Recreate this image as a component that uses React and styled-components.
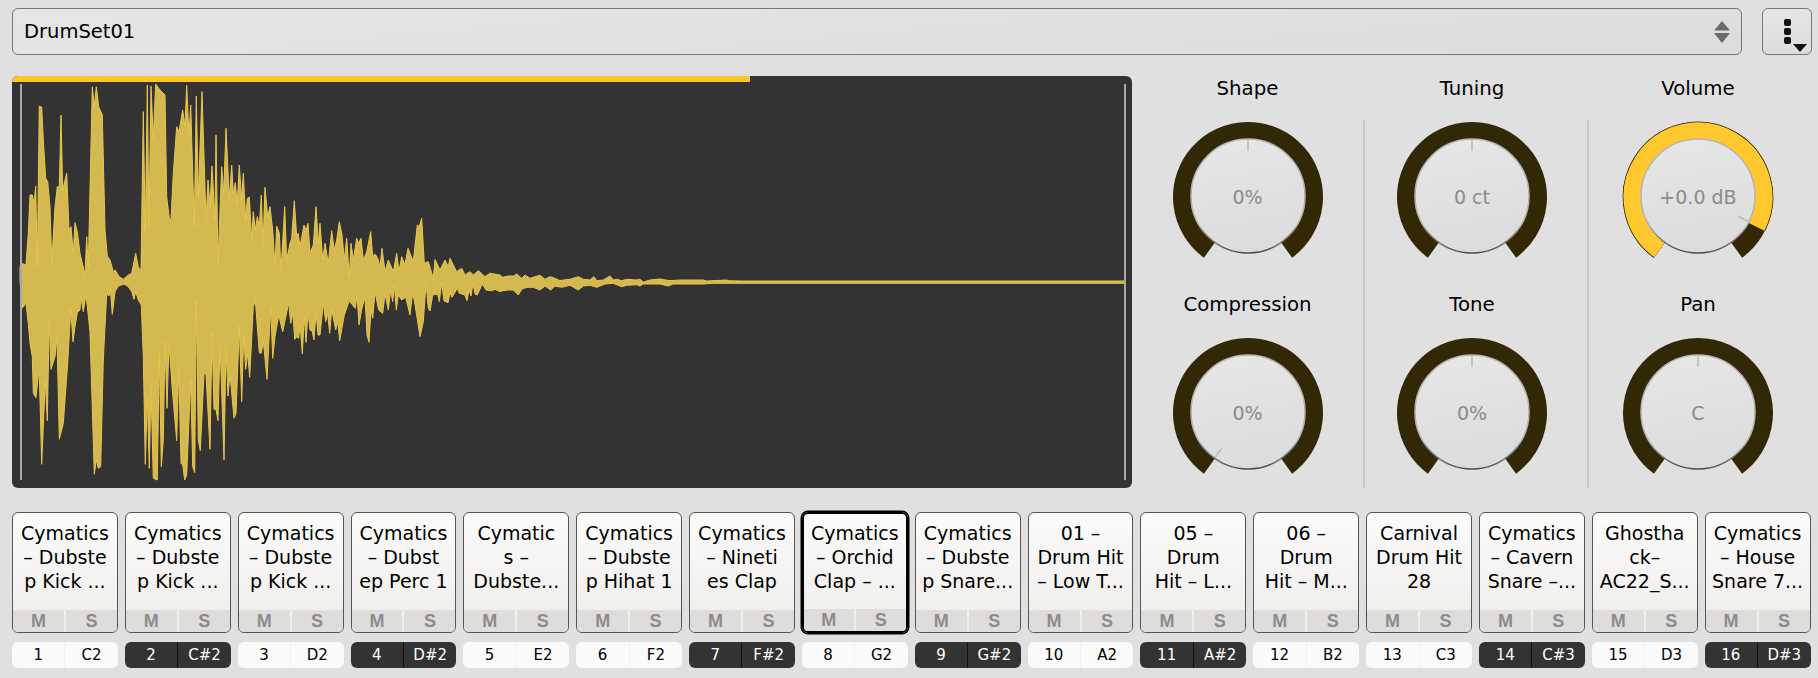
import React from 'react';
import styled, { createGlobalStyle } from 'styled-components';

const Global = createGlobalStyle`
  html, body { margin: 0; background: #e0e0e0; }
  body { font-family: "DejaVu Sans", "Liberation Sans", sans-serif; color: #000; }
`;

const Page = styled.div`
  width: 1818px;
  height: 678px;
  box-sizing: border-box;
  padding: 8px 6px 0 12px;
  display: flex;
  flex-direction: column;
  overflow: hidden;
`;

const TopBar = styled.div`
  display: flex;
  height: 47px;
  gap: 20px;
  margin-bottom: 21px;
`;

const PresetSelect = styled.div`
  flex: 1;
  box-sizing: border-box;
  display: flex;
  align-items: center;
  justify-content: space-between;
  padding: 0 10px 0 11px;
  border: 1.5px solid #777;
  border-radius: 6px;
  background: linear-gradient(175deg, #e6e6e6, #dcdcdc);
  font-size: 19.5px;
`;

const MenuButton = styled.div`
  width: 50px;
  box-sizing: border-box;
  border: 1.5px solid #777;
  border-radius: 6px;
  background: linear-gradient(175deg, #e6e6e6, #dcdcdc);
  display: flex;
`;

const Main = styled.div`
  display: flex;
  height: 412px;
  margin-bottom: 24px;
`;

const WavePanel = styled.div`
  position: relative;
  width: 1120px;
  height: 412px;
  background: #333;
  border-radius: 6px;
  overflow: hidden;
  flex: none;
`;

const WaveSvg = styled.svg`
  display: block;
  width: 100%;
  height: 100%;
`;

const Progress = styled.div`
  position: absolute;
  top: 0;
  left: 0;
  height: 6px;
  background: #ffc42e;
`;

const Marker = styled.div`
  position: absolute;
  top: 8px;
  bottom: 8px;
  width: 1.5px;
  background: #a8a8a8;
  left: ${p => p.$left}px;
`;

const Controls = styled.div`
  flex: 1;
  display: grid;
  grid-template-columns: 231px 224px 224px;
  grid-template-rows: 412px;
`;

const Column = styled.div`
  position: relative;
  display: flex;
  flex-direction: column;
  box-sizing: border-box;
  padding-right: ${p => p.$shift || 0}px;
  &::before {
    content: '';
    display: ${p => (p.$divider ? 'block' : 'none')};
    position: absolute;
    left: 0;
    top: 44px;
    bottom: 0;
    width: 1.5px;
    background: #c8c8c8;
  }
`;

const KnobCell = styled.div`
  height: 216px;
  flex: none;
  display: flex;
  flex-direction: column;
  align-items: center;
`;

const KnobLabel = styled.div`
  height: 26px;
  line-height: 26px;
  font-size: 19.75px;
  margin-bottom: 17px;
  white-space: nowrap;
`;

const KnobBody = styled.div`
  position: relative;
  width: 156px;
  height: 156px;
`;

const KnobSvg = styled.svg`
  display: block;
  width: 156px;
  height: 156px;
`;

const KnobValue = styled.div`
  position: absolute;
  inset: 0;
  display: flex;
  align-items: center;
  justify-content: center;
  font-size: 19px;
  color: #8a8a8a;
  white-space: nowrap;
`;

const PadGrid = styled.div`
  display: grid;
  grid-template-columns: repeat(16, 1fr);
  column-gap: 7px;
  margin-right: 1.5px;
`;

const PadSlot = styled.div`
  display: flex;
  flex-direction: column;
  min-width: 0;
`;

const Pad = styled.div`
  height: 121px;
  box-sizing: border-box;
  display: flex;
  flex-direction: column;
  border: ${p => (p.$selected ? '2.5px solid #000' : '1.5px solid #555')};
  border-radius: 6px;
  background: linear-gradient(180deg, #fbfbfa, #efedea);
  overflow: hidden;
  box-shadow: ${p => (p.$selected ? '0 0 0 1.5px #000' : 'none')};
`;

const PadName = styled.div`
  flex: 1;
  padding-top: ${p => (p.$selected ? 7 : 8)}px;
  text-align: center;
  font-size: 19px;
  line-height: 24px;
  white-space: nowrap;
`;

const PadLine = styled.div`
  display: block;
`;

const MuteSolo = styled.div`
  display: flex;
  height: 22px;
  gap: 2px;
`;

const MuteSoloCell = styled.div`
  flex: 1;
  display: flex;
  align-items: center;
  justify-content: center;
  background: #dfdddb;
  color: #8c8c8c;
  font: bold 18px "Liberation Sans", Arial, sans-serif;
`;

const KeyRow = styled.div`
  margin-top: 9px;
  height: 26px;
  display: flex;
  border-radius: 6px;
  overflow: hidden;
  background: ${p => (p.$black ? '#333' : '#fafafa')};
  color: ${p => (p.$black ? '#fff' : '#000')};
  font-size: 15px;
`;

const KeyCell = styled.div`
  flex: 1;
  display: flex;
  align-items: center;
  justify-content: center;
  border-left: ${p => (p.$split ? `1.5px solid ${p.$black ? '#111' : '#f2f2f2'}` : 'none')};
`;

const upper = `60,800 65,790 78,795 85,700 90,585 97,585 102,610 107,558 112,800 118,318 125,322 130,420 137,535 143,545 150,620 155,790 165,620 172,560 178,560 183,345 188,570 200,520 207,690 213,680 220,760 225,668 232,695 240,760 255,825 260,710 265,800 277,260 283,320 289,260 296,320 307,345 315,690 322,768 330,780 340,815 345,810 358,830 370,838 385,825 395,820 407,760 415,800 423,812 430,335 436,700 442,255 447,680 453,258 460,415 467,252 480,270 495,285 500,590 508,655 513,660 520,520 530,380 537,395 548,330 555,380 560,255 567,410 572,315 583,680 589,288 595,590 606,275 618,660 624,540 630,620 636,498 645,660 648,405 654,790 665,500 671,580 678,385 688,600 695,495 700,580 706,548 712,610 718,495 725,600 730,520 737,660 742,595 748,592 755,720 760,635 766,690 772,650 778,680 784,585 789,740 795,562 803,650 810,620 818,690 825,800 830,678 838,700 843,815 854,620 860,780 870,730 875,715 883,602 890,710 895,700 900,740 912,675 918,690 924,670 930,760 940,735 948,620 955,730 960,670 968,780 975,730 985,790 995,692 1003,750 1010,720 1018,665 1026,705 1033,780 1040,715 1048,830 1053,730 1060,780 1070,715 1076,730 1083,715 1090,780 1100,755 1112,695 1118,770 1125,762 1133,775 1140,800 1146,745 1155,815 1165,780 1180,815 1190,760 1197,815 1205,770 1215,795 1224,745 1240,785 1252,675 1258,680 1265,655 1273,790 1285,785 1300,835 1305,778 1320,810 1335,780 1345,800 1350,775 1360,795 1370,815 1385,805 1395,825 1410,815 1420,825 1435,812 1455,830 1470,820 1500,825`;
const lower = `60,0 66,85 78,70 85,130 90,190 97,230 100,340 108,353 115,285 118,280 125,553 136,300 142,422 148,120 153,268 165,230 171,170 178,478 190,430 203,250 212,88 219,185 225,140 232,98 240,90 243,50 250,95 258,42 270,155 283,583 289,540 295,565 302,560 310,240 320,42 327,48 331,25 337,103 345,35 355,18 372,12 385,20 395,35 402,58 407,35 415,60 424,75 430,230 436,553 442,350 448,565 453,318 460,595 472,600 478,218 484,560 490,480 495,185 501,385 507,190 517,330 530,482 536,265 543,550 548,555 554,600 560,585 572,300 578,560 584,578 589,60 595,480 601,512 612,280 618,282 630,508 636,158 642,388 648,388 654,422 660,190 672,540 678,200 684,348 690,282 702,415 708,400 718,138 725,365 731,165 737,268 743,220 749,292 760,80 766,60 778,218 784,220 790,182 801,298 812,80 818,235 825,170 836,105 848,155 866,68 872,130 878,97 884,178 890,170 896,175 900,132 907,222 913,108 918,187 924,95 930,150 936,152 942,180 948,95 954,165 960,165 970,68 977,125 983,100 989,160 995,88 1007,150 1013,125 1019,182 1033,105 1048,62 1060,78 1066,85 1071,45 1077,135 1085,88 1095,52 1101,165 1107,187 1113,88 1118,115 1125,35 1136,90 1148,100 1155,42 1165,90 1172,30 1178,65 1183,15 1189,90 1195,45 1205,60 1217,52 1230,105 1237,45 1243,60 1260,170 1270,125 1278,8 1285,85 1290,93 1298,45 1313,42 1318,65 1325,8 1332,62 1344,68 1350,38 1356,52 1372,25 1378,40 1395,45 1401,62 1407,30 1413,48 1419,10 1425,42 1432,45 1447,12 1458,30 1475,32 1485,28 1500,35`;
const tailUp = `68,52 85,48 100,48 110,42 125,55 135,45 150,55 165,50 180,46 195,58 210,50 225,55 240,62 250,60 270,58 295,50 310,58 330,60 342,50 350,62 370,60 390,48 400,60 410,58 425,62 440,58 470,60 480,58 490,66 510,60 540,57 570,62 600,60 640,60 670,60 680,63 740,60 745,62 780,63 1935,63`;
const tailDown = `68,92 85,90 100,90 115,105 125,88 140,82 160,82 180,90 195,78 212,90 225,78 245,82 270,76 295,90 310,78 330,76 350,82 375,72 400,70 425,80 440,76 470,74 480,78 490,72 510,72 540,72 565,78 580,72 620,72 670,72 700,70 780,70 1935,70`;

const parse = (s, fx, fy) =>
  s.trim().split(/\s+/).map(p => {
    const [x, y] = p.split(',').map(Number);
    return [fx(x), fy(y)];
  });

const upPts = [
  ...parse(upper, x => x / 3, y => y / 3),
  ...parse(tailUp, x => 480 + x / 3, y => 260 + y / 3),
];
const downPts = [
  ...parse(lower, x => x / 3, y => 280 + y / 3),
  ...parse(tailDown, x => 480 + x / 3, y => 260 + y / 3),
];
const wavePath =
  'M' +
  [...upPts, ...downPts.slice().reverse()]
    .map(([x, y]) => `${x.toFixed(1)} ${y.toFixed(1)}`)
    .join('L') +
  'Z';

const Waveform = () => (
  <WaveSvg viewBox="12 76 1120 412">
    <path d={wavePath} fill="#d4b850" stroke="#e8c64c" strokeWidth="1" strokeLinejoin="round" />
  </WaveSvg>
);

const polar = (r, deg, cx = 78, cy = 78) => {
  const a = (deg * Math.PI) / 180;
  return [cx + r * Math.sin(a), cy - r * Math.cos(a)];
};

const arc = (r, a0, a1) => {
  const [x0, y0] = polar(r, a0);
  const [x1, y1] = polar(r, a1);
  return `M${x0.toFixed(2)} ${y0.toFixed(2)}A${r} ${r} 0 ${a1 - a0 > 180 ? 1 : 0} 1 ${x1.toFixed(2)} ${y1.toFixed(2)}`;
};

const Knob = ({ id, value, tick = 0, fillTo }) => {
  const [tx0, ty0] = polar(56, tick, 78, 77);
  const [tx1, ty1] = polar(45, tick, 78, 77);
  return (
    <KnobBody>
      <KnobSvg viewBox="0 0 156 156">
        <defs>
          <linearGradient id={`face-${id}`} x1="0.4" y1="0" x2="0.6" y2="1">
            <stop offset="0" stopColor="#e6e6e6" />
            <stop offset="1" stopColor="#dcdcdc" />
          </linearGradient>
          <linearGradient id={`rim-${id}`} x1="0" y1="0" x2="0" y2="1">
            <stop offset="0" stopColor="#b4b4b4" />
            <stop offset="0.75" stopColor="#b4b4b4" />
            <stop offset="1" stopColor="#4a4a44" />
          </linearGradient>
        </defs>
        <path d={arc(65.5, -144, 144)} fill="none" stroke="#332806" strokeWidth="19" />
        {fillTo !== undefined && (
          <>
            <path d={arc(65.5, -144, fillTo)} fill="none" stroke="#332806" strokeWidth="19.5" />
            <path d={arc(65.5, -144, fillTo)} fill="none" stroke="#ffc82f" strokeWidth="18" />
          </>
        )}
        <circle cx="78" cy="77" r="57" fill={`url(#face-${id})`} stroke={`url(#rim-${id})`} strokeWidth="1.5" />
        <line x1={tx0} y1={ty0} x2={tx1} y2={ty1} stroke="#b8b8b8" strokeWidth="1.5" />
      </KnobSvg>
      <KnobValue>{value}</KnobValue>
    </KnobBody>
  );
};

const columns = [
  { shift: 0, divider: false, knobs: [
    { id: 'shape', label: 'Shape', value: '0%' },
    { id: 'comp', label: 'Compression', value: '0%', tick: -144 },
  ] },
  { shift: 6, divider: true, knobs: [
    { id: 'tuning', label: 'Tuning', value: '0 ct' },
    { id: 'tone', label: 'Tone', value: '0%' },
  ] },
  { shift: 2, divider: true, knobs: [
    { id: 'volume', label: 'Volume', value: '+0.0 dB', tick: 117, fillTo: 117 },
    { id: 'pan', label: 'Pan', value: 'C' },
  ] },
];

const pads = [
  [['Cymatics', '– Dubste', 'p Kick ...'], '1', 'C2', false],
  [['Cymatics', '– Dubste', 'p Kick ...'], '2', 'C#2', true],
  [['Cymatics', '– Dubste', 'p Kick ...'], '3', 'D2', false],
  [['Cymatics', '– Dubst', 'ep Perc 1'], '4', 'D#2', true],
  [['Cymatic', 's –', 'Dubste...'], '5', 'E2', false],
  [['Cymatics', '– Dubste', 'p Hihat 1'], '6', 'F2', false],
  [['Cymatics', '– Nineti', 'es Clap'], '7', 'F#2', true],
  [['Cymatics', '– Orchid', 'Clap – ...'], '8', 'G2', false],
  [['Cymatics', '– Dubste', 'p Snare...'], '9', 'G#2', true],
  [['01 –', 'Drum Hit', '– Low T...'], '10', 'A2', false],
  [['05 –', 'Drum', 'Hit – L...'], '11', 'A#2', true],
  [['06 –', 'Drum', 'Hit – M...'], '12', 'B2', false],
  [['Carnival', 'Drum Hit', '28'], '13', 'C3', false],
  [['Cymatics', '– Cavern', 'Snare –...'], '14', 'C#3', true],
  [['Ghostha', 'ck–', 'AC22_S...'], '15', 'D3', false],
  [['Cymatics', '– House', 'Snare 7...'], '16', 'D#3', true],
];

export default function App() {
  return (
    <Page>
      <Global />
      <TopBar>
        <PresetSelect>
          <span>DrumSet01</span>
          <svg width="18" height="24" viewBox="0 0 18 24">
            <path d="M9 1L17 10.5H1Z" fill="#6a6a6a" />
            <path d="M9 23L17 13H1Z" fill="#6a6a6a" />
          </svg>
        </PresetSelect>
        <MenuButton>
          <svg width="47" height="44" viewBox="0 0 47 44">
            <rect x="21" y="10" width="7" height="7" rx="2" fill="#111" />
            <rect x="21" y="19" width="7" height="7" rx="2" fill="#111" />
            <rect x="21" y="28" width="7" height="7" rx="2" fill="#111" />
            <path d="M30 35H44L37 43Z" fill="#111" />
          </svg>
        </MenuButton>
      </TopBar>
      <Main>
        <WavePanel>
          <Waveform />
          <Progress style={{ width: 738 }} />
          <Marker $left={8} />
          <Marker $left={1112} />
        </WavePanel>
        <Controls>
          {columns.map((c, i) => (
            <Column key={i} $shift={c.shift} $divider={c.divider}>
              {c.knobs.map(k => (
                <KnobCell key={k.id}>
                  <KnobLabel>{k.label}</KnobLabel>
                  <Knob id={k.id} value={k.value} tick={k.tick} fillTo={k.fillTo} />
                </KnobCell>
              ))}
            </Column>
          ))}
        </Controls>
      </Main>
      <PadGrid>
        {pads.map(([lines, num, note, black], i) => (
          <PadSlot key={num}>
            <Pad $selected={i === 7}>
              <PadName $selected={i === 7}>
                {lines.map((l, j) => (
                  <PadLine key={j}>{l}</PadLine>
                ))}
              </PadName>
              <MuteSolo>
                <MuteSoloCell>M</MuteSoloCell>
                <MuteSoloCell>S</MuteSoloCell>
              </MuteSolo>
            </Pad>
            <KeyRow $black={black}>
              <KeyCell>{num}</KeyCell>
              <KeyCell $split $black={black}>{note}</KeyCell>
            </KeyRow>
          </PadSlot>
        ))}
      </PadGrid>
    </Page>
  );
}
